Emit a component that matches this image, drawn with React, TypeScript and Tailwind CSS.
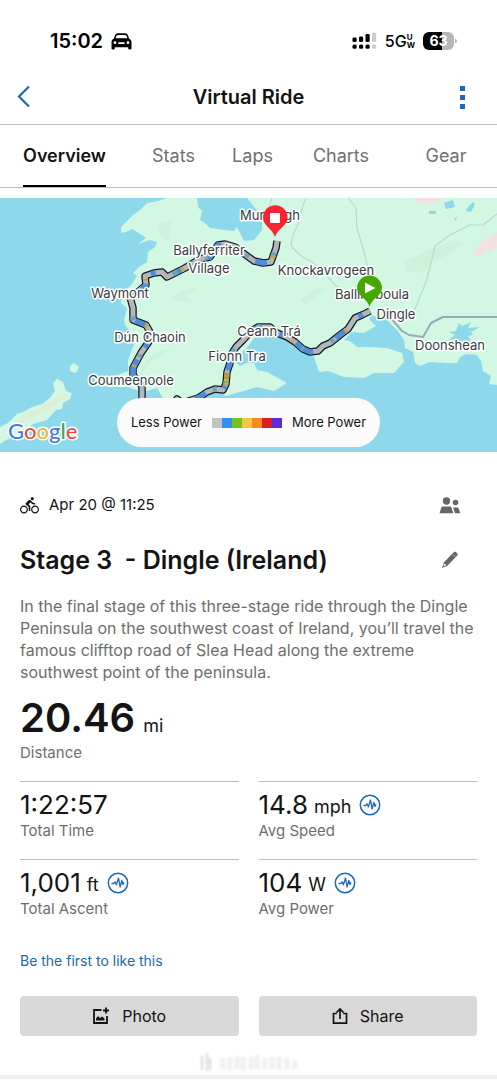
import React from "react";
import { MdDirectionsBike } from "react-icons/md";

const ROUTE_WEST =
  "M277 241L276 248L271 262L263 263L254 261L243 253L235 247L225 244L218 245L210 257L200 259L185 268L175 273L167 277L162 272L154 273L145 276L146 285L139 291L130 297L133 308L133 320L146 325L150 332L150 340L141 353L133 368L133 375L142 386L142 402";
const ROUTE_EAST =
  "M174 404L177 399L182 403L198 398L207 392L215 389L223 390L226 384L227 372L230 363L231 355L236 347L243 340L250 332L258 327L270 327L277 333L287 337L295 342L303 349L310 352L318 351L323 346L330 343L340 335L348 329L355 318L362 315L370 311";

const PLACES = [
  { name: "Murreagh", x: 270, y: 220 },
  { name: "Ballyferriter", x: 209, y: 255 },
  { name: "Village", x: 209, y: 273 },
  { name: "Knockavrogeen", x: 326, y: 275 },
  { name: "Waymont", x: 120, y: 298 },
  { name: "Ballinaboula", x: 372, y: 299 },
  { name: "Dingle", x: 396, y: 319 },
  { name: "Ceann Trá", x: 269, y: 336 },
  { name: "Dún Chaoin", x: 150, y: 342 },
  { name: "Doonshean", x: 450, y: 350 },
  { name: "Fionn Tra", x: 237, y: 361 },
  { name: "Coumeenoole", x: 131, y: 385 },
];

const TABS = ["Overview", "Stats", "Laps", "Charts", "Gear"];

function CarIcon() {
  return (
    <svg width="21" height="17" viewBox="0 0 21 17" fill="black" aria-hidden="true">
      <path
        fillRule="evenodd"
        d="M5.2.8C6.5.2 14.5.2 15.8.8c1 .5 1.7 2.7 2.3 5 1.6.7 2.4 1.6 2.4 3.4v6.1c0 .7-.4 1.1-1 1.1h-1.2c-.7 0-1.1-.4-1.1-1.1v-1.1H3.8v1.1c0 .7-.4 1.1-1.1 1.1H1.5c-.6 0-1-.4-1-1.1V9.2c0-1.8.8-2.7 2.4-3.4.6-2.3 1.3-4.5 2.3-5ZM5.9 2.3c-.5.3-.9 1.6-1.3 3h11.8c-.4-1.4-.8-2.7-1.3-3-.8-.4-8.4-.4-9.2 0ZM4 8.3a1.4 1.4 0 1 0 0 2.8 1.4 1.4 0 0 0 0-2.8Zm13 0a1.4 1.4 0 1 0 0 2.8 1.4 1.4 0 0 0 0-2.8ZM8 9.2c-1.1 0-1.1 1.7 0 1.7h5c1.1 0 1.1-1.7 0-1.7Z"
      />
    </svg>
  );
}

function SignalIcon() {
  return (
    <svg width="25" height="18" viewBox="0 0 25 18" aria-hidden="true">
      <g fill="black">
        <rect x="0.5" y="5.5" width="4.2" height="4.5" rx="1.3" />
        <rect x="7" y="4.5" width="4.2" height="5.5" rx="1.3" />
        <rect x="13.5" y="2" width="4.2" height="8" rx="1.3" />
        <rect x="0.5" y="12.5" width="4.2" height="4.3" rx="1.5" />
        <rect x="7" y="12.5" width="4.2" height="4.3" rx="1.5" />
        <rect x="13.5" y="12.5" width="4.2" height="4.3" rx="1.5" />
      </g>
      <g fill="#cccccc">
        <rect x="20" y="0.5" width="4.2" height="9.5" rx="1.3" />
        <rect x="20" y="12.5" width="4.2" height="4.3" rx="1.5" />
      </g>
    </svg>
  );
}

function PeopleIcon() {
  return (
    <svg width="22" height="17" viewBox="0 0 22 17" fill="#666666" aria-hidden="true">
      <circle cx="7.500" cy="4" r="3.700" />
      <circle cx="16.500" cy="5.500" r="2.800" />
      <path d="M4.200 9.500h6.500c1 0 1.600.5 1.900 1.400l1.700 5.300H.5l1.700-5.300c.3-.9 1-1.400 2-1.400ZM14 10.500h4c.9 0 1.400.4 1.700 1.200l1.600 4.500h-5.200Z" />
    </svg>
  );
}

function PencilIcon() {
  return (
    <svg width="18" height="18" viewBox="0 0 18 18" aria-hidden="true">
      <path fill="#666666" d="M12.700 1.200c.7-.7 1.400-.7 2.100-.1l1.500 1.400c.7.700.6 1.400 0 2.100L6.300 14.700 1 17l2-5.700Z" />
      <path fill="white" d="M3.600 12.500l1.600 1.600-2.400 1.100-.4-.4Z" />
      <path stroke="white" strokeWidth=".5" d="M11.900 3.300l2.500 2.400" />
    </svg>
  );
}

function WaveIcon() {
  return (
    <svg width="22" height="22" viewBox="0 0 22 22" fill="none" stroke="#1d68bf" aria-hidden="true">
      <circle cx="11" cy="11" r="9.700" strokeWidth="1.500" />
      <path
        d="M5 11.500h1.800l1.200-1.700 1.400 3L11.500 6l1.600 9 1.700-6.500 1.200 4 .8-1.700"
        strokeWidth="1.300"
        strokeLinejoin="round"
        strokeLinecap="round"
      />
    </svg>
  );
}

function PhotoIcon() {
  return (
    <svg width="18" height="18" viewBox="0 0 18 18" fill="none" stroke="#141414" strokeWidth="1.800" aria-hidden="true">
      <path d="M9.500 3H2v13h13V9M14 .5v6M11 3.500h6" />
      <path d="M4 13.500v-2l2-2.500 2 2 2-1.500 2.500 2v2Z" fill="#141414" stroke="none" />
    </svg>
  );
}

function ShareIcon() {
  return (
    <svg width="16" height="18" viewBox="0 0 16 18" fill="none" stroke="#141414" strokeWidth="1.700" aria-hidden="true">
      <path d="M4.800 6.500H1.500v9.700h13V6.500h-3.300M8 12V2.500M4.500 5.500 8 2l3.500 3.500" />
    </svg>
  );
}

function RideRoute({ d }: { d: string }) {
  return (
    <g fill="none" strokeLinejoin="round">
      <path d={d} stroke="#151922" strokeWidth="7.500" />
      <path d={d} stroke="#b4b6bc" strokeWidth="5" />
      <path d={d} stroke="#4d8ddb" strokeWidth="5" strokeDasharray="12 20 5 14 20 27" strokeDashoffset="-26" />
      <path d={d} stroke="#6ca6bb" strokeWidth="5" strokeDasharray="3 31 4 47" strokeDashoffset="-12" />
      <path d={d} stroke="#c5a847" strokeWidth="5" strokeDasharray="3 43 2 61" strokeDashoffset="-15" />
    </g>
  );
}

function RideMap() {
  return (
    <svg className="block h-full w-full" viewBox="0 198 497 254" preserveAspectRatio="xMidYMid slice" role="img" aria-label="Ride map">
      <rect x="0" y="198" width="497" height="254" fill="#8ed8ec" />
      <path
        fill="#d2f7e2"
        d="M167 198L158 201L147 203L140 210L133 215L121 227L121 233L126 232L132 229L142 235L146 238L138 244L150 240L157 242L155 247L148 252L147 262L139 267L133 273L137 276L131 285L123 293L121 303L127 308L124 320L125 325L132 333L136 338L133 347L128 360L128 371L113 377L100 380L93 384L110 387L127 387L143 392L157 388L163 398L168 404H190L207 395L218 391L226 396L247 390L257 387L274 391L287 383L267 372L257 370L254 363L247 363L240 366L236 363L239 355L247 348L254 338L264 336L280 337L297 348L314 357L319 372L328 371L344 377L364 378L374 373L394 373L404 362L402 353L387 348L371 347L357 347L350 341L344 340L352 332L364 333L376 326L369 319L373 315L379 320L387 319L390 323L397 330L404 340L405 348L413 352L415 363L420 366L430 362L447 363L457 363L460 357L466 354L477 355L481 361L483 371L491 376L489 384L497 385V198H247L262 217L262 230L254 240L244 241L237 227L234 231L225 230L210 228L205 223L200 220L202 211L198 207L197 198Z"
      />
      <g fill="#8ed8ec">
        <path d="M247 205q14 3 15 18q-2 14-12 17l-12-12V198Z" />
        <path d="M444 203l9-3 2 7-9 2ZM468 207l5-5 2 2-4 8-5-1ZM429 211h7v3h-7ZM454 219l4-3-3 5ZM459 323l3 3 9-4-3 6 12-1-9 5 2 3-5 1 4 7-8-3-4 5-1-6-11 1 7-5-6-3 7-1Z" />
      </g>
      <g fill="#f1e2df">
        <path d="M415 198h29l-12 6-13-1ZM497 232l-16 10-8 13 7 1 17-9Z" />
      </g>
      <g fill="#c6f0d8" opacity=".6">
        <path d="M160 223l10-2 1 12-3 8-10-9ZM171 298l9-6 17-5-11 10 8 5-14-1ZM405 262l28-14 21-8 10 3-23 15-22 15-13-2ZM300 299l17-11 10 1-22 15ZM145 362l12-10 17-4-22 13-13 16Z" />
      </g>
      <g fill="none" strokeLinejoin="round">
        <path
          d="M348 198l8 10 1 20 8 27 6 32M306 198q-5 11-7 24-10 20-7 25 11 12 19 14 17 15 25 25l18 10M272 198l-5 15 7 23M497 214l-14 11h-13l-20 10-15 11-3 13-6 23-9 22-3 7-16 10"
          stroke="#c2d5cb"
          strokeWidth="1.200"
        />
        <path d="M390 317l12 14 7 4 14 2 8-14 12-6h54" stroke="#9aaaba" strokeWidth="2" />
      </g>
      <g fill="#d2f7e2">
        <path d="M0 427L8 423 17 414 23 412 32 407 42 404 50 398 55 391 53 383 57 379 63 382 66 391 72 393 70 399 63 403 62 409 56 410 47 420 33 424 20 435 8 439 0 444Z" />
        <path d="M70 366l4-3 5 4-3 6-6-2Z" />
      </g>
      <path d="M9 429l12-13 15-5 10-7 12-8 8-2-9 10-14 8-10 5-12 6Z" fill="#ddeed5" />
      <RideRoute d={ROUTE_WEST} />
      <RideRoute d={ROUTE_EAST} />
      <path d="M227 373l-1 11" stroke="#d9862b" strokeWidth="5" strokeDasharray="2 2" />
      <path d="M227 375l-1 9" stroke="#8bb53a" strokeWidth="5" strokeDasharray="2 4" />
      <g
        fontFamily="Inter, 'Liberation Sans', sans-serif"
        fontSize="13"
        textAnchor="middle"
        fill="#373d42"
        stroke="white"
        strokeWidth="3"
        strokeLinejoin="round"
        paintOrder="stroke"
      >
        {PLACES.map((p) => (
          <text key={p.name} x={p.x} y={p.y}>
            {p.name}
          </text>
        ))}
      </g>
      <path d="M275 237C273 229 263 226 263 217.500a12.300 12.300 0 0 1 24.600 0C287.600 226 277 229 275 237Z" fill="#fa2331" />
      <rect x="270" y="213" width="10" height="10" rx="1" fill="white" />
      <path d="M369.500 307C368 299 357 296 357 288a12.500 12.500 0 0 1 25 0C382 296 371 299 369.500 307Z" fill="#47a600" />
      <path d="M365 282.500v11l10.500-5.500Z" fill="white" />
      <text
        x="8"
        y="439"
        fontFamily="Lato, sans-serif"
        fontSize="22"
        fontWeight="500"
        stroke="white"
        strokeWidth="3"
        strokeLinejoin="round"
        paintOrder="stroke"
      >
        <tspan fill="#4778dd">G</tspan>
        <tspan fill="#df4e43">o</tspan>
        <tspan fill="#eeb72c">o</tspan>
        <tspan fill="#4778dd">g</tspan>
        <tspan fill="#39a55b">l</tspan>
        <tspan fill="#df4e43">e</tspan>
      </text>
    </svg>
  );
}

function Stat({ value, unit, label, wave }: { value: string; unit?: string; label: string; wave?: boolean }) {
  return (
    <div className="h-[78px] border-t border-[#bdbdbd] pt-[7px]">
      <dd className="flex h-8 items-center">
        <span className="text-[26px] leading-8">{value}</span>
        {unit && <span className="ml-1.5 pt-1 text-lg leading-7">{unit}</span>}
        {wave && (
          <span className="ml-2">
            <WaveIcon />
          </span>
        )}
      </dd>
      <dt className="text-[15px] leading-5 text-[#6e6e6e]">{label}</dt>
    </div>
  );
}

export default function App() {
  return (
    <div className="min-h-screen bg-white font-['Inter','Liberation_Sans',sans-serif] text-[#141414]">
      <div className="flex h-[70px] items-center justify-between pr-10 pl-[50px] pt-3 text-black">
        <div className="flex items-center gap-2 text-xl font-semibold">
          <span>15:02</span>
          <CarIcon />
        </div>
        <div className="flex items-center">
          <SignalIcon />
          <span className="ml-2 text-base font-medium">5G</span>
          <span className="flex flex-col text-[8px] leading-[8px] font-bold">
            <span>U</span>
            <span>W</span>
          </span>
          <span className="ml-2 flex h-[18px] w-[31px] items-center justify-center rounded-md bg-linear-to-r from-black from-62% to-[#b7b7b7] to-62% text-sm font-bold text-white">
            63
          </span>
          <span className="ml-px h-1 w-0.5 rounded-r bg-[#b7b7b7]" />
        </div>
      </div>

      <header className="grid h-[55px] grid-cols-[1fr_auto_1fr] items-center border-b border-[#bdbdbd] px-4">
        <button aria-label="Back" className="flex w-4 justify-self-start">
          <svg width="16" height="22" viewBox="0 0 16 22" fill="none" stroke="#1d68bf" strokeWidth="2.200">
            <path d="M13 .5 3 10.500l10 10" />
          </svg>
        </button>
        <h1 className="text-xl font-semibold">Virtual Ride</h1>
        <button aria-label="More options" className="mr-4 flex flex-col gap-1 justify-self-end">
          <span className="size-[5px] bg-[#1d68bf]" />
          <span className="size-[5px] bg-[#1d68bf]" />
          <span className="size-[5px] bg-[#1d68bf]" />
        </button>
      </header>

      <nav className="grid h-[63px] grid-cols-[129fr_89fr_69fr_108fr_102fr] justify-items-center border-b border-[#bdbdbd]">
        {TABS.map((tab, i) => (
          <a
            key={tab}
            href={`#${tab.toLowerCase()}`}
            className={
              i === 0
                ? "flex items-center border-b-2 border-black pt-0.5 text-lg font-semibold"
                : "flex items-center border-b-2 border-transparent pt-0.5 text-lg text-[#707070]"
            }
          >
            {tab}
          </a>
        ))}
      </nav>

      <section className="relative mt-2.5 h-[254px]">
        <RideMap />
        <div className="absolute inset-x-0 bottom-[5px] flex justify-center">
          <div className="flex h-[49px] items-center gap-2.5 rounded-full bg-[#fbfbfb] px-3.5 text-[13px]">
            <span>Less Power</span>
            <span className="flex h-2.5 w-[70px]">
              <span className="flex-1 bg-[#c2c2c2]" />
              <span className="flex-1 bg-[#338ff0]" />
              <span className="flex-1 bg-[#72c51e]" />
              <span className="flex-1 bg-[#f7c446]" />
              <span className="flex-1 bg-[#f58a1d]" />
              <span className="flex-1 bg-[#dc1c24]" />
              <span className="flex-1 bg-[#5a2bd8]" />
            </span>
            <span>More Power</span>
          </div>
        </div>
      </section>

      <main className="px-5">
        <div className="flex items-center justify-between pt-[41px] pr-4">
          <div className="flex items-center gap-2.5">
            <MdDirectionsBike size={19} />
            <time className="text-[15px] leading-6">Apr 20 @ 11:25</time>
          </div>
          <button aria-label="Visible to connections">
            <PeopleIcon />
          </button>
        </div>

        <div className="mt-6 flex h-[38px] items-center justify-between pr-[18px]">
          <h2 className="text-[25px] leading-9 font-semibold whitespace-pre">Stage 3  - Dingle (Ireland)</h2>
          <button aria-label="Edit title">
            <PencilIcon />
          </button>
        </div>

        <p className="mt-4 text-base leading-[22px] text-[#6e6e6e]">
          In the final stage of this three-stage ride through the Dingle Peninsula on the southwest coast of Ireland, you’ll travel the famous clifftop road of Slea Head along the extreme southwest point of the peninsula.
        </p>

        <dl>
          <div className="mt-3 h-[86px]">
            <dd className="flex items-baseline gap-2">
              <span className="text-[40px] leading-[46px] font-semibold">20.46</span>
              <span className="text-lg">mi</span>
            </dd>
            <dt className="mt-0.5 text-[15px] leading-5 text-[#6e6e6e]">Distance</dt>
          </div>
          <div className="grid grid-cols-2 gap-x-5">
            <Stat value="1:22:57" label="Total Time" />
            <Stat value="14.8" unit="mph" label="Avg Speed" wave />
            <Stat value="1,001" unit="ft" label="Total Ascent" wave />
            <Stat value="104" unit="W" label="Avg Power" wave />
          </div>
        </dl>

        <a href="#like" className="mt-[14px] block text-sm leading-5 text-[#2269a9]">
          Be the first to like this
        </a>

        <div className="mt-[25px] grid grid-cols-2 gap-5">
          <button className="flex h-10 items-center justify-center gap-3 rounded bg-[#d8d8d8] text-base">
            <PhotoIcon />
            Photo
          </button>
          <button className="flex h-10 items-center justify-center gap-3 rounded bg-[#d8d8d8] text-base">
            <ShareIcon />
            Share
          </button>
        </div>
      </main>

      <div className="mt-4 flex h-5 justify-center" aria-hidden="true">
        <svg width="104" height="20" viewBox="0 0 104 20" className="blur-[1px]">
          <path d="M5 4v14M10 1v18M13 6v12" stroke="#d8d8d8" strokeWidth="2" />
          <path
            d="M26 6v11M33 5v13M40 4v13M46 5v13M54 5v12M60 3v14M68 6v11M75 5v12M82 5v13M90 6v11M98 8v9"
            stroke="#f0f0f0"
            strokeWidth="5"
          />
        </svg>
      </div>
      <div className="mt-[3px] h-1 bg-[#f0f0f0]" />
    </div>
  );
}
